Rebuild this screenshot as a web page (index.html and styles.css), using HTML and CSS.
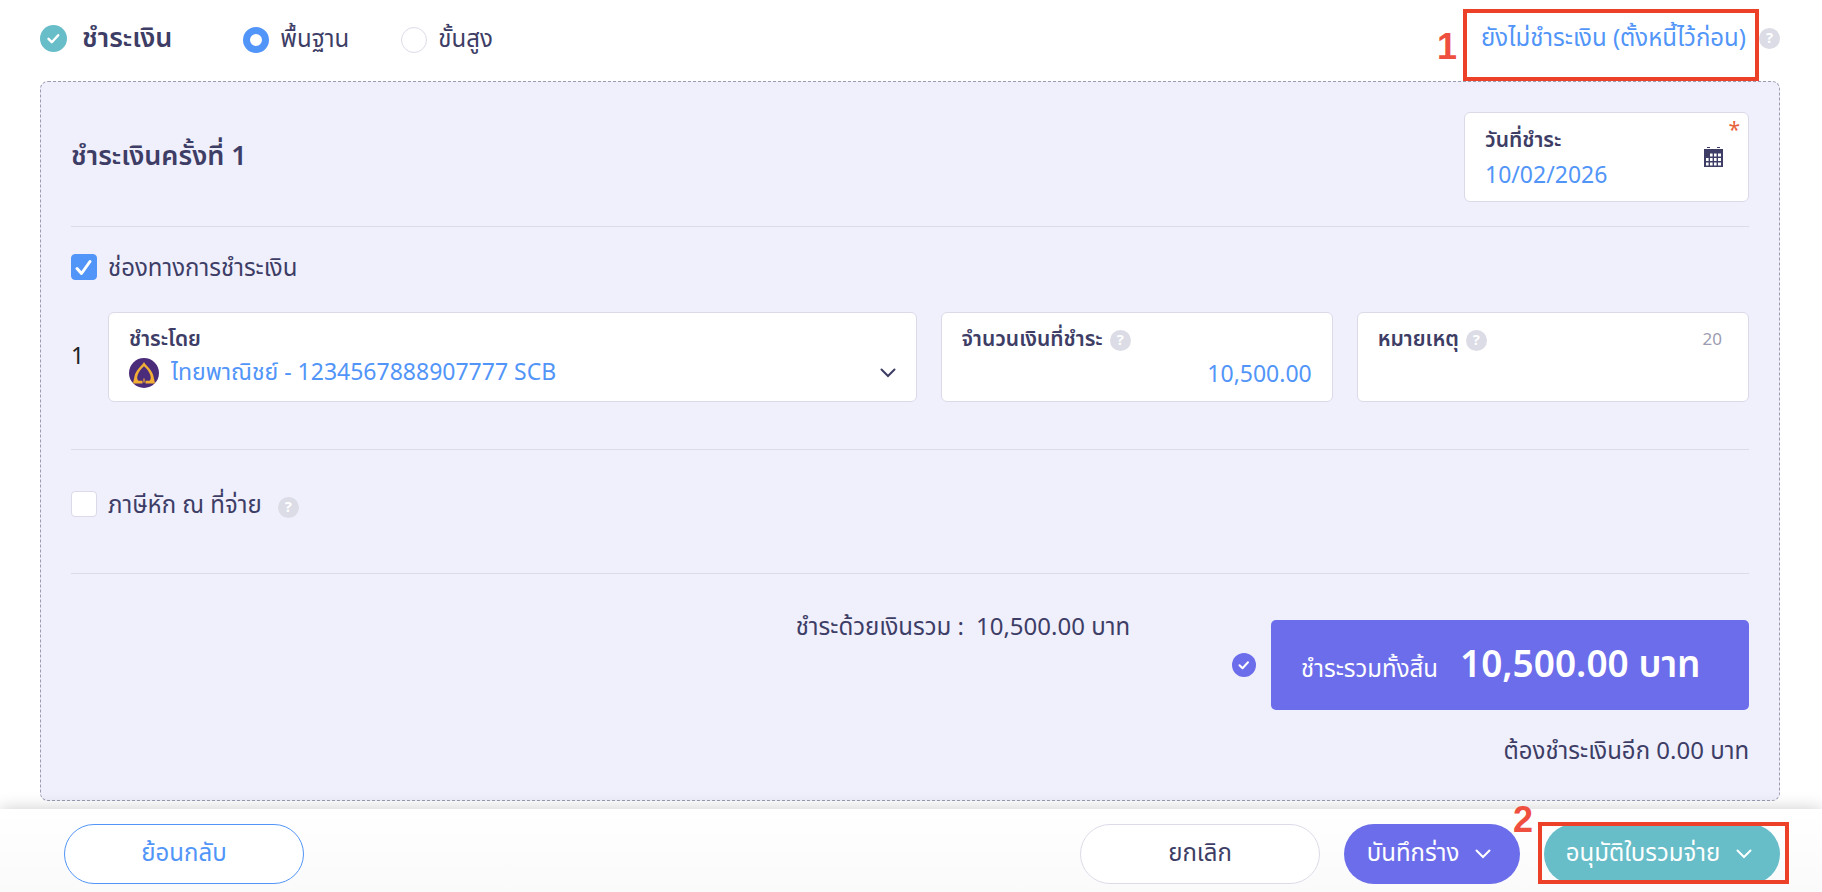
FILE: index.html
```html
<!DOCTYPE html>
<html lang="th">
<head>
    <meta charset="UTF-8">
    <meta name="viewport" content="width=device-width, initial-scale=1.0">
    <title>ชำระเงิน</title>
    <link rel="stylesheet" href="styles.css">
</head>
<body>
    <main class="payment">
        <header class="topbar">
            <svg class="icon-done" viewBox="0 0 27 27"><circle cx="13.5" cy="13.5" r="13.5" fill="#67bdc8"/><path d="M8.5 13.8l3.3 3.4 6.4-7" fill="none" stroke="#fff" stroke-width="2.4" stroke-linecap="round" stroke-linejoin="round"/></svg>
            <h1 class="title">ชำระเงิน</h1>
            <div class="modes">
                <label class="mode"><input type="radio" name="mode" checked>พื้นฐาน</label>
                <label class="mode"><input type="radio" name="mode">ขั้นสูง</label>
            </div>
            <div class="skip">
                <a class="skip-link" href="#">ยังไม่ชำระเงิน (ตั้งหนี้ไว้ก่อน)</a>
                <span class="mark mark-skip"></span>
                <span class="step step-one">1</span>
            </div>
            <span class="help">?</span>
        </header>

        <section class="panel">
            <div class="panel-head">
                <h2 class="title">ชำระเงินครั้งที่ 1</h2>
                <div class="field date-field">
                    <div class="date-main">
                        <label class="field-label" for="date">วันที่ชำระ</label>
                        <input class="field-input" type="text" id="date" value="10/02/2026">
                    </div>
                    <svg class="icon-calendar" viewBox="0 0 19 20"><path d="M3 0h3v1H3zM13 0h3v1h-3zM0 2h19v18H0z" fill="#3d3d66"/><path d="M6 6.5h2.6v3H6zM10 6.5h2.6v3H10zM14 6.5h3v3h-3zM2 11h2.6v3H2zM6 11h2.6v3H6zM10 11h2.6v3H10zM14 11h3v3h-3zM2 15.5h2.6v3H2zM6 15.5h2.6v3H6zM10 15.5h2.6v3H10zM14 15.5h3v3h-3z" fill="#fff"/></svg>
                    <span class="required">*</span>
                </div>
            </div>

            <div class="channel">
                <label class="check"><input type="checkbox" checked><span>ช่องทางการชำระเงิน</span></label>
                <div class="channel-row">
                    <span class="row-no">1</span>
                    <div class="fields">
                        <div class="field field-wide">
                            <label class="field-label" for="bank">ชำระโดย</label>
                            <div class="bank">
                                <svg class="icon-bank" viewBox="0 0 30 30"><circle cx="15" cy="15" r="15" fill="#4b2c7b"/><path d="M15 4C12.500 8.500 6.500 12 5.500 18.500L4 25.500h9.500V22.800H9.500C6.500 20 9 13.500 15 8.200 21 13.500 23.500 20 20.500 22.800h-4V25.500H26L24.500 18.500C23.500 12 17.500 8.500 15 4z" fill="#f3ae35"/><path d="M14.400 20.500h1.200v4h-1.200z" fill="#f3ae35"/></svg>
                                <select class="field-input" id="bank">
                                    <option>ไทยพาณิชย์ - 1234567888907777 SCB</option>
                                </select>
                                <svg class="icon-arrow" viewBox="0 0 16 10"><path d="M1.500 1.500L8 8l6.500-6.500"/></svg>
                            </div>
                        </div>
                        <div class="field">
                            <div class="label-line">
                                <label class="field-label" for="amount">จำนวนเงินที่ชำระ</label>
                                <span class="help">?</span>
                            </div>
                            <input class="field-input amount" type="text" id="amount" value="10,500.00">
                        </div>
                        <div class="field">
                            <div class="label-line">
                                <label class="field-label" for="note">หมายเหตุ</label>
                                <span class="help">?</span>
                                <span class="counter">20</span>
                            </div>
                            <input class="field-input" type="text" id="note">
                        </div>
                    </div>
                </div>
            </div>

            <div class="tax">
                <label class="check"><input type="checkbox"><span>ภาษีหัก ณ ที่จ่าย</span></label>
                <span class="help">?</span>
            </div>

            <div class="summary">
                <p class="subtotal"><span>ชำระด้วยเงินรวม :</span><span>10,500.00 บาท</span></p>
                <div class="total-line">
                    <svg class="icon-ok" viewBox="0 0 24 24"><circle cx="12" cy="12" r="12" fill="#6c6dea"/><path d="M7.500 12.200l3 3 5.500-6" fill="none" stroke="#fff" stroke-width="2" stroke-linecap="round" stroke-linejoin="round"/></svg>
                    <div class="total">
                        <span>ชำระรวมทั้งสิ้น</span>
                        <strong>10,500.00 บาท</strong>
                    </div>
                </div>
            </div>
            <p class="remain">ต้องชำระเงินอีก 0.00 บาท</p>
        </section>
    </main>

    <footer class="actions">
        <button class="btn btn-back">ย้อนกลับ</button>
        <button class="btn btn-cancel">ยกเลิก</button>
        <button class="btn btn-draft">บันทึกร่าง<svg class="icon-arrow" viewBox="0 0 16 10"><path d="M1.500 1.500L8 8l6.500-6.500"/></svg></button>
        <div class="approve">
            <button class="btn btn-approve">อนุมัติใบรวมจ่าย<svg class="icon-arrow" viewBox="0 0 16 10"><path d="M1.500 1.500L8 8l6.500-6.500"/></svg></button>
            <span class="mark mark-approve"></span>
            <span class="step step-two">2</span>
        </div>
    </footer>
</body>
</html>
```
FILE: styles.css
```css
* { box-sizing: border-box; }
body {
    margin: 0;
    min-height: 100vh;
    display: flex;
    flex-direction: column;
    background: #fff;
    color: #3d3d66;
    font-family: "Noto Sans Thai", "Noto Sans", sans-serif;
    font-size: 24px;
    font-weight: 400;
    line-height: 32px;
}
h1, h2, p { margin: 0; }
input, select, button { font: inherit; color: inherit; }

.payment { padding: 0 42px 0 40px; }
.title { font-size: 27px; font-weight: 600; }

/* top bar */
.topbar { height: 81px; padding-bottom: 4px; display: flex; align-items: center; }
.icon-done { width: 27px; height: 27px; margin-right: 15px; }
.modes { display: flex; gap: 52px; margin-left: 71px; padding-top: 2px; }
.mode { display: flex; align-items: center; gap: 11px; }
.mode input {
    appearance: none;
    width: 26px;
    height: 26px;
    margin: 0;
    border: 1px solid #dcdce8;
    border-radius: 50%;
    background: #fff;
}
.mode input:checked { border: 7px solid #5295f8; }
.skip { position: relative; margin-left: auto; padding-right: 13px; }
.skip-link { color: #5295f8; text-decoration: none; }
.help {
    flex: none;
    width: 21px;
    height: 21px;
    border-radius: 50%;
    background: #dcdce6;
    color: #fff;
    font-size: 15px;
    font-weight: 700;
    line-height: 21px;
    text-align: center;
}

/* numbered marks */
.mark { position: absolute; border: 4px solid #ec4128; pointer-events: none; }
.mark-skip { top: -14px; right: 0; bottom: -26px; left: -18px; }
.mark-approve { top: -2px; right: -9px; bottom: 0; left: -6px; }
.step {
    position: absolute;
    color: #ee4f3e;
    font: bold 36px/36px "Liberation Sans", sans-serif;
}
.step-one { top: 6px; left: -44px; }
.step-two { top: -22px; left: -31px; }

/* panel */
.panel {
    padding: 30px 30px 32px;
    border: 1px dashed #9c9cb0;
    border-radius: 8px;
    background: #f0effc;
}
.panel-head {
    display: flex;
    align-items: center;
    justify-content: space-between;
    padding-bottom: 24px;
    border-bottom: 1px solid #dadae8;
}
.field {
    min-width: 0;
    height: 90px;
    padding: 10px 20px;
    border: 1px solid #dadae8;
    border-radius: 6px;
    background: #fff;
}
.field-label { display: block; font-size: 21px; font-weight: 600; line-height: 34px; white-space: nowrap; }
.field-input {
    display: block;
    width: 100%;
    height: 36px;
    padding: 0;
    border: 0;
    outline: 0;
    background: transparent;
    color: #5295f8;
    font-size: 23px;
    line-height: 36px;
}
.date-field { position: relative; display: flex; align-items: center; width: 285px; padding-right: 25px; }
.date-main { flex: 1; min-width: 0; padding-top: 3px; }
.icon-calendar { width: 19px; height: 20px; }
.required { position: absolute; top: 6px; right: 8px; color: #e8613c; font-size: 21px; line-height: 24px; }

.check { display: flex; align-items: center; gap: 11px; }
.check span { padding-top: 4px; }
.check input {
    appearance: none;
    width: 26px;
    height: 26px;
    margin: 0;
    border: 1px solid #dadae8;
    border-radius: 4px;
    background: #fff;
}
.check input:checked {
    border-color: #5295f8;
    background: #5295f8 url("data:image/svg+xml,%3Csvg xmlns='http://www.w3.org/2000/svg' viewBox='0 0 24 24'%3E%3Cpath d='M5 13.500l4.500 5L18 6.500' fill='none' stroke='%23fff' stroke-width='3' stroke-linecap='round' stroke-linejoin='round'/%3E%3C/svg%3E") center / 24px no-repeat;
}
.channel { padding: 22px 0 47px; border-bottom: 1px solid #dadae8; }
.channel-row { display: flex; align-items: center; margin-top: 27px; }
.row-no { width: 37px; color: #222; font-size: 23px; }
.fields { flex: 1; display: grid; grid-template-columns: repeat(4, 1fr); gap: 24px; }
.field-wide { grid-column: span 2; }
.bank { display: flex; align-items: center; gap: 12px; }
.bank select { flex: 1; height: 32px; appearance: none; line-height: 32px; }
.icon-bank { width: 30px; height: 30px; }
.icon-arrow { flex: none; width: 16px; height: 10px; fill: none; stroke: currentColor; stroke-width: 2; stroke-linecap: round; }
.label-line { display: flex; align-items: center; gap: 7px; }
.counter { margin-left: auto; padding-right: 6px; color: #9c9cb0; font-size: 17px; }
.amount { text-align: right; }

.tax { display: flex; align-items: center; gap: 16px; padding: 36px 0 51px; border-bottom: 1px solid #dadae8; }
.tax .help { margin-top: 6px; }

.summary { display: flex; justify-content: flex-end; gap: 102px; margin-top: 46px; }
.subtotal { display: flex; gap: 12px; height: 32px; margin-top: -8px; }
.total-line { display: flex; align-items: center; gap: 15px; }
.icon-ok { width: 24px; height: 24px; }
.total {
    display: flex;
    align-items: baseline;
    gap: 22px;
    width: 478px;
    height: 90px;
    padding: 21px 30px 19px;
    border-radius: 5px;
    background: #6c6dea;
    color: #fff;
}
.total strong { font-size: 37px; font-weight: 600; line-height: 50px; }
.remain { margin-top: 26px; text-align: right; }

/* bottom actions */
.actions {
    display: flex;
    gap: 24px;
    margin-top: 8px;
    padding: 15px 42px 9px 64px;
    background: linear-gradient(#fff, #fafafa);
    box-shadow: 0 0 16px rgba(0, 0, 0, .2);
}
.btn {
    display: flex;
    align-items: center;
    justify-content: center;
    gap: 16px;
    height: 60px;
    padding: 0 26px 0 20px;
    border: 1px solid transparent;
    border-radius: 30px;
    white-space: nowrap;
    cursor: pointer;
}
.btn-back,
.btn-cancel { width: 240px; padding: 0 20px; background: #fff; }
.btn-back { margin-right: auto; border-color: #5295f8; color: #5295f8; }
.btn-cancel { border-color: #dcdce8; }
.btn-draft { width: 176px; background: #6c6dea; color: #fff; }
.approve { position: relative; }
.btn-approve { width: 236px; background: #67bdc8; color: #fff; }
```
